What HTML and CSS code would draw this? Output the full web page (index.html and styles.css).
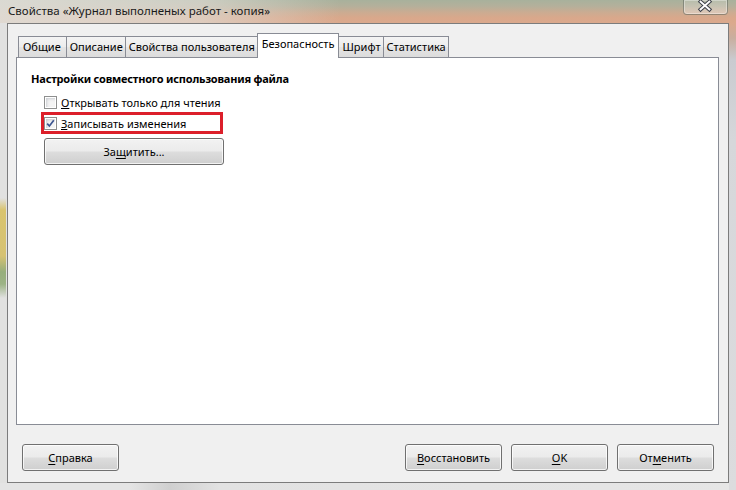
FILE: index.html
```html
<!DOCTYPE html>
<html lang="ru">
<head>
<meta charset="utf-8">
<title>Свойства</title>
<link rel="stylesheet" href="styles.css">
</head>
<body>
<div class="window">
  <div class="titlebar">
    <span class="title">Свойства «Журнал выполненых работ - копия»</span>
    <span class="close">
      <svg width="45" height="15" viewBox="0 0 45 15">
        <path d="M18 2.5 L27 10.5 M27 2.5 L18 10.5" stroke="#3b3f48" stroke-width="4" stroke-linecap="square"/>
        <path d="M18 2.5 L27 10.5 M27 2.5 L18 10.5" stroke="#ffffff" stroke-width="2" stroke-linecap="square"/>
      </svg>
    </span>
  </div>
  <div class="client">
    <div class="tabs">
      <div class="tab first">Общие</div>
      <div class="tab">Описание</div>
      <div class="tab">Свойства пользователя</div>
      <div class="tab active">Безопасность</div>
      <div class="tab">Шрифт</div>
      <div class="tab">Статистика</div>
    </div>
    <div class="panel">
      <div class="heading">Настройки совместного использования файла</div>
      <div class="check">
        <span class="box"></span>
        <span class="label"><u>О</u>ткрывать только для чтения</span>
      </div>
      <div class="check marked">
        <span class="box">
          <svg width="9" height="9" viewBox="0 0 9 9">
            <path d="M1.2 4.6 L3.4 7 L7.8 1.2" fill="none" stroke="#3c5591" stroke-width="1.7"/>
          </svg>
        </span>
        <span class="label"><u>З</u>аписывать изменения</span>
        <span class="highlight"></span>
      </div>
      <button class="btn protect">За<u>щ</u>итить...</button>
    </div>
    <div class="footer">
      <button class="btn"><u>С</u>правка</button>
      <span class="spacer"></span>
      <button class="btn"><u>В</u>осстановить</button>
      <button class="btn"><u>O</u>K</button>
      <button class="btn">От<u>м</u>енить</button>
    </div>
  </div>
</div>
</body>
</html>
```
FILE: styles.css
```css
* { box-sizing: border-box; }

html, body {
  margin: 0;
  padding: 0;
}

body {
  width: 736px;
  height: 490px;
  overflow: hidden;
  font-family: "Noto Sans", "Open Sans", sans-serif;
  font-size: 11px;
  color: #000;
  background:
    linear-gradient(to right, rgba(224,222,216,0.9) 0, rgba(224,222,216,0.65) 200px, rgba(224,222,216,0) 340px) 0 0 / 100% 23px no-repeat,
    linear-gradient(to bottom, #a8b19c 0, #b4b09b 6px, #cdab91 13px, #d9a88b 18px, #dba98d 23px) 0 0 / 100% 23px no-repeat,
    linear-gradient(to bottom, transparent 198px, #d9c46e 210px, #d6c272 256px, #96ae7c 272px, #9cb385 284px, transparent 298px) 0 0 / 6px 100% no-repeat,
    linear-gradient(to bottom, #dba98d 23px, #c8ae9f 38px, #c9cbd0 60px, #d6d7da 140px, #dcdcde 100%) 100% 0 / 7px 100% no-repeat,
    linear-gradient(to right, #e4e4e4 0, #e4e4e4 130px, #cfcfcf 170px, #e2e2e2 220px, #e6e6e6 100%) 0 100% / 100% 7px no-repeat,
    #e1e1e0;
}

.window {
  display: flex;
  flex-direction: column;
  height: 490px;
}

.titlebar {
  height: 23px;
  display: flex;
  justify-content: space-between;
  align-items: flex-start;
  padding: 0 8px 0 8px;
}

.title {
  margin-top: 3px;
  line-height: 15px;
  font-size: 11.5px;
  color: #1a1a1a;
}

.close {
  width: 45px;
  height: 15px;
  border: 1px solid rgba(60, 70, 60, 0.45);
  border-top: none;
  border-radius: 0 0 4px 4px;
  background: linear-gradient(to bottom, rgba(255,255,255,0.15), rgba(255,255,255,0.35));
  box-shadow: inset 0 0 0 1px rgba(255,255,255,0.35);
  display: flex;
}

.close svg {
  display: block;
  margin: -1px 0 0 -1px;
}

.client {
  flex: 1;
  margin: 0 7px 7px 7px;
  border: 1px solid #7c7c7c;
  background: #f0f0f0;
  display: flex;
  flex-direction: column;
  padding: 9px 9px 10px 8px;
}

.tabs {
  display: flex;
  align-items: flex-end;
  height: 25px;
  padding-left: 2px;
  margin-bottom: -1px;
  position: relative;
  z-index: 1;
}

.tab {
  height: 21px;
  margin-bottom: 1px;
  margin-right: -1px;
  padding: 0 2px 0 3px;
  border: 1px solid #898c95;
  border-bottom: none;
  line-height: 20px;
  white-space: nowrap;
  background: linear-gradient(to bottom, #f4f4f4 0, #ececec 50%, #e4e4e4 51%, #dcdcdc 100%);
}

.tab.first {
  padding: 0 5px 0 4px;
}

.tab.active {
  height: 25px;
  margin-bottom: 0;
  padding: 0 4px 0 4px;
  line-height: 20px;
  background: #ffffff;
  position: relative;
  z-index: 2;
}

.panel {
  height: 368px;
  border: 1px solid #898c95;
  background: #ffffff;
  padding: 13px 14px 0 14px;
}

.heading {
  font-weight: bold;
  letter-spacing: -0.2px;
  line-height: 15px;
  margin-bottom: 6px;
}

.check {
  position: relative;
  display: flex;
  align-items: center;
  height: 21px;
  margin-left: 13px;
}

.box {
  width: 13px;
  height: 13px;
  border: 1px solid #8e8f8f;
  background: #f4f4f4;
  box-shadow: inset 0 0 0 1px #ffffff, inset 2px 2px 3px #c9ccd1;
  display: flex;
  align-items: center;
  justify-content: center;
  margin-right: 4px;
}

.box svg {
  display: block;
}

.label {
  line-height: 15px;
}

.highlight {
  position: absolute;
  left: -3px;
  top: -1px;
  width: 182px;
  height: 22px;
  border: 3px solid #dc1f2a;
}

.btn {
  font-family: inherit;
  font-size: 11px;
  color: #000;
  height: 27px;
  width: 97px;
  border: 1px solid #707070;
  border-radius: 3px;
  background: linear-gradient(to bottom, #f2f2f2 0, #ebebeb 48%, #dddddd 52%, #cfcfcf 100%);
  box-shadow: inset 0 0 0 1px rgba(255,255,255,0.75);
  padding: 0;
  margin: 0;
  line-height: 25px;
}

.btn u {
  text-underline-offset: 2px;
}

.protect {
  display: block;
  width: 180px;
  margin: 4px 0 0 13px;
}

.footer {
  display: flex;
  gap: 9px;
  margin-top: 19px;
  padding: 0 5px 0 6px;
}

.spacer {
  flex: 1;
}
```
